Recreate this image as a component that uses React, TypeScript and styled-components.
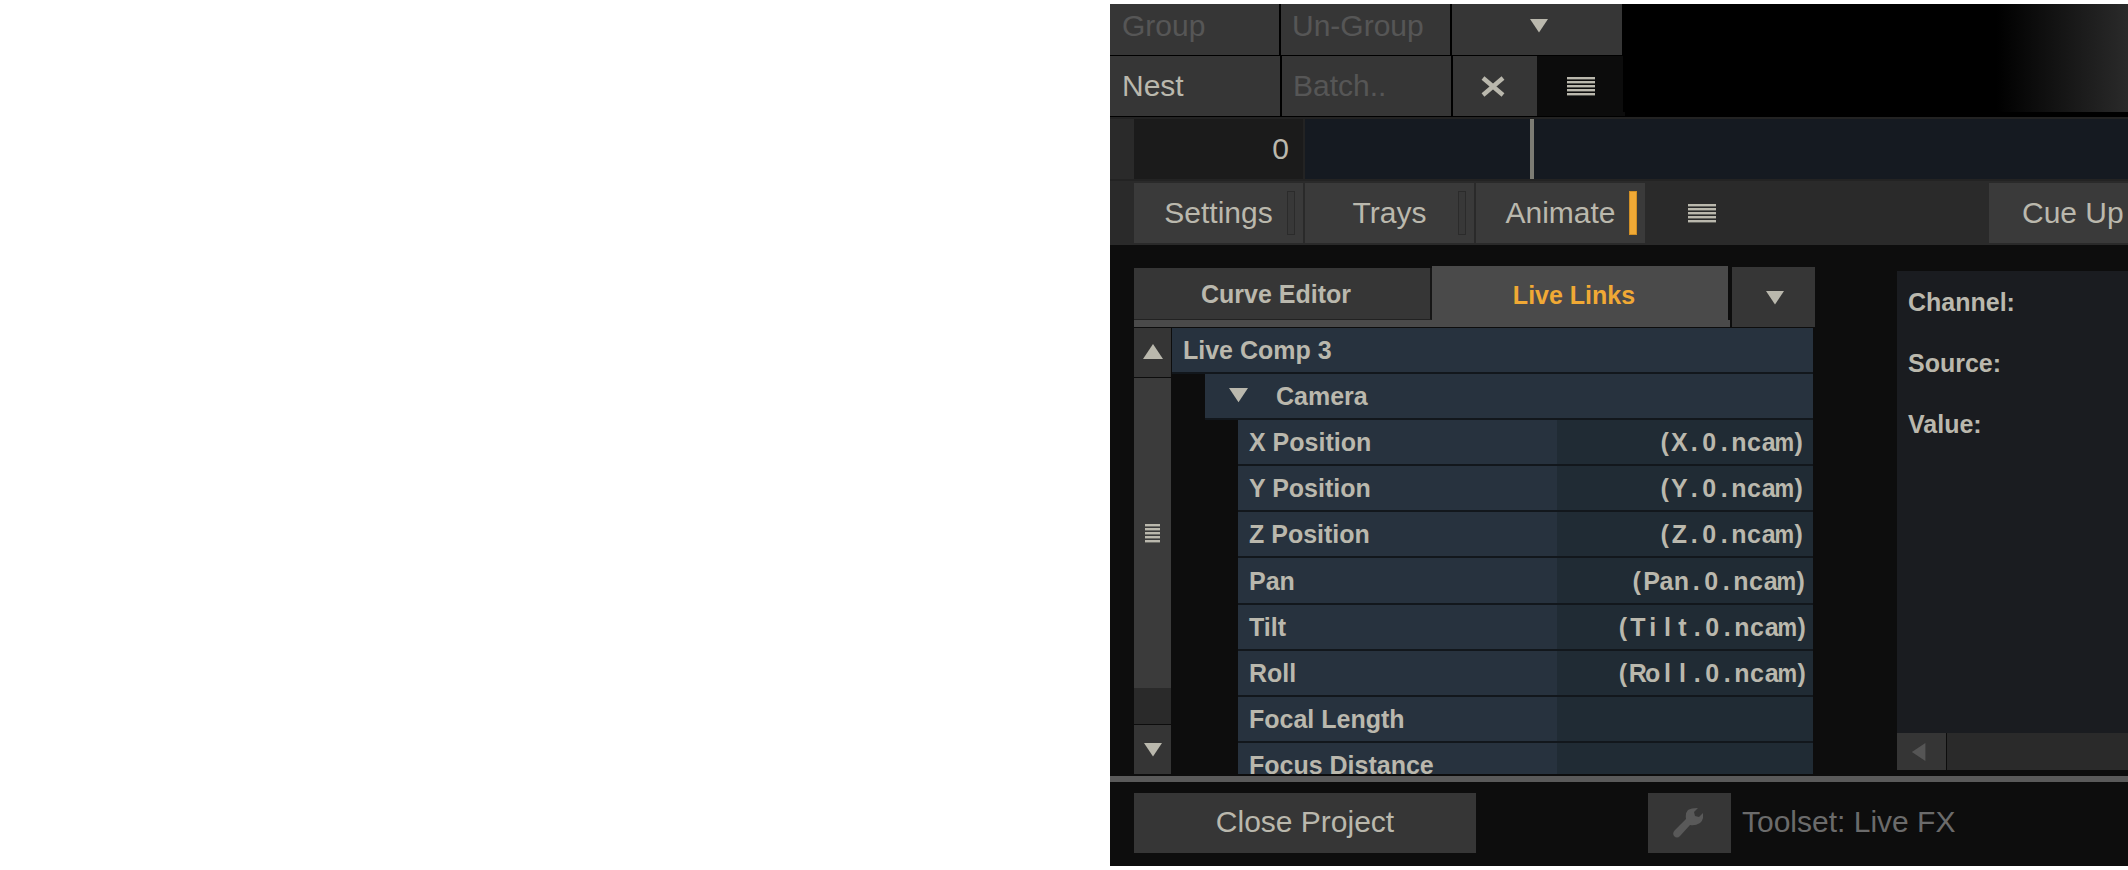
import React from "react"
import styled, { createGlobalStyle } from "styled-components"

const text_color = "#bab8ad"
const dim_color = "#565656"
const orange = "#f0a935"
const button_bg = "#363636"
const strip_bg = "#2a2a2a"
const dark_bg = "#0d0d0d"

const GlobalStyle = createGlobalStyle`
  html, body {
    margin: 0;
    padding: 0;
    background: #fff;
  }
  * {
    box-sizing: border-box;
  }
`

const Page = styled.div`
  height: 870px;
  padding: 4px 0;
  display: flex;
  justify-content: flex-end;
  font-family: "Liberation Sans", Arial, sans-serif;
  color: ${text_color};
`

const Panel = styled.div`
  width: 1018px;
  height: 862px;
  background: ${dark_bg};
  display: flex;
  flex-direction: column;
  overflow: hidden;
`

const TopArea = styled.div`
  height: 113px;
  background: #000;
  display: flex;
`

const ButtonGrid = styled.div`
  width: 513px;
  flex: none;
  display: flex;
  flex-direction: column;
  gap: 1px;
`

const GridRow = styled.div<{ $height: number }>`
  height: ${p => p.$height}px;
  display: flex;
  gap: 2px;
`

const GridButton = styled.div<{
  $width: number
  $dim?: boolean
  $center?: boolean
  $dark?: boolean
  $lift?: number
  $pad?: number
}>`
  width: ${p => p.$width}px;
  flex: none;
  display: flex;
  align-items: center;
  justify-content: ${p => (p.$center ? "center" : "flex-start")};
  padding-left: ${p => p.$pad ?? (p.$center ? 0 : 11)}px;
  padding-bottom: ${p => p.$lift ?? 0}px;
  font-size: 30px;
  background: ${p => (p.$dark ? "#0c0c0c" : button_bg)};
  color: ${p => (p.$dim ? dim_color : text_color)};
`

const MenuCell = styled(GridButton)`
  margin-left: -2px;
`

const CloseCell = styled(GridButton)`
  padding-right: 4px;
`

const Fade = styled.div`
  flex: 1;
  height: 108px;
  background: linear-gradient(to right, #000 74%, #2a2a2a 100%);
`

const TimeRow = styled.div`
  height: 64px;
  padding: 2px 0;
  display: flex;
  background: #232323;
`

const TimeInset = styled.div`
  width: 24px;
  background: ${strip_bg};
`

const TimeField = styled.div`
  width: 169px;
  padding-right: 14px;
  background: #1b1b1b;
  display: flex;
  align-items: center;
  justify-content: flex-end;
  font-size: 30px;
`

const TimeTrack = styled.div`
  flex: 1;
  margin-left: 2px;
  padding-left: 225px;
  background: #151a21;
`

const Playhead = styled.div`
  width: 4px;
  height: 100%;
  background: #7c7c74;
`

const ModeBar = styled.div`
  height: 64px;
  padding: 2px 0 2px 24px;
  display: flex;
  gap: 2px;
  background: ${strip_bg};
`

const ModeButton = styled.div`
  position: relative;
  width: 169px;
  display: flex;
  align-items: center;
  justify-content: center;
  font-size: 30px;
  background: #3a3a3a;
`

const Indicator = styled.span<{ $on?: boolean }>`
  position: absolute;
  right: 8px;
  top: 8px;
  bottom: 8px;
  width: 8px;
  background: ${p => (p.$on ? orange : "#383838")};
  border: 1px solid ${p => (p.$on ? "#d08f25" : "#2b2b2b")};
`

const ModeMenu = styled.div`
  width: 69px;
  display: flex;
  align-items: center;
  justify-content: flex-end;
`

const CueButton = styled.div`
  margin-left: auto;
  width: 139px;
  padding-left: 33px;
  display: flex;
  align-items: center;
  font-size: 30px;
  white-space: nowrap;
  background: #3a3a3a;
`

const Main = styled.div`
  height: 530px;
  padding-left: 24px;
  display: flex;
`

const LeftColumn = styled.div`
  width: 681px;
  flex: none;
  padding-top: 21px;
  display: flex;
  flex-direction: column;
`

const TabBar = styled.div`
  height: 62px;
  display: flex;
  gap: 2px;
`

const TabGroup = styled.div`
  width: 596px;
  display: flex;
  flex-direction: column;
`

const TabRow = styled.div`
  height: 54px;
  display: flex;
`

const Tab = styled.div<{ $active?: boolean }>`
  width: 298px;
  padding-right: 12px;
  display: flex;
  align-items: center;
  justify-content: center;
  font-size: 25px;
  font-weight: bold;
  ${p =>
    p.$active
      ? `
    padding-top: 4px;
    background: #4a4a4a;
    border-right: 2px solid ${dark_bg};
    color: ${orange};
  `
      : `
    margin-top: 2px;
    padding-top: 2px;
    background: #363636;
    border-right: 2px solid #161616;
    border-bottom: 1px solid #222;
  `}
`

const TabSill = styled.div`
  height: 7px;
  background: #4a4a4a;
`

const TabMenu = styled.div`
  width: 83px;
  height: 60px;
  margin-top: 1px;
  padding: 23px 0 0 2px;
  background: #363636;
  display: flex;
  align-items: flex-start;
  justify-content: center;
`

const ListArea = styled.div`
  height: 446px;
  display: flex;
`

const ScrollColumn = styled.div`
  width: 37px;
  display: flex;
  flex-direction: column;
`

const ScrollButton = styled.div<{ $height: number; $drop?: number }>`
  height: ${p => p.$height}px;
  padding-top: ${p => p.$drop ?? 0}px;
  flex: none;
  background: #353535;
  display: flex;
  align-items: center;
  justify-content: center;
`

const ScrollThumb = styled.div`
  height: 310px;
  margin-top: 1px;
  background: #3b3b3b;
  display: flex;
  align-items: center;
  justify-content: center;
`

const ScrollRest = styled.div`
  height: 36px;
  margin-bottom: 1px;
  background: #2a2a2a;
`

const Tree = styled.div`
  width: 641px;
  margin-left: 1px;
  overflow: hidden;
`

const TreeRow = styled.div<{ $indent: number }>`
  height: 46.1px;
  margin-left: ${p => p.$indent}px;
  display: flex;
  font-size: 25px;
  font-weight: bold;
  border-bottom: 2px solid #12171c;
`

const NameCell = styled.div<{ $width?: number; $pad: number; $drop?: number }>`
  ${p => (p.$width ? `width: ${p.$width}px;` : "flex: 1;")}
  padding-left: ${p => p.$pad}px;
  padding-top: ${p => p.$drop ?? 0}px;
  display: flex;
  align-items: center;
  white-space: nowrap;
  background: #27323e;
`

const TreeCaret = styled.span`
  display: flex;
  margin-right: 28px;
`

const ValueCell = styled.div<{ $inset: number }>`
  flex: 1;
  padding-top: 1px;
  padding-right: ${p => p.$inset}px;
  display: flex;
  align-items: center;
  justify-content: flex-end;
  background: #202b34;
`

const ValueChar = styled.span<{ $narrow?: boolean }>`
  width: 14.9px;
  display: inline-flex;
  justify-content: center;
  ${p => p.$narrow && "transform: scaleX(0.88) translateX(1px);"}
`

const InfoPanel = styled.div`
  flex: 1;
  margin: 26px 0 5px 82px;
  display: flex;
  flex-direction: column;
`

const InfoBody = styled.div`
  flex: 1;
  padding: 1px 0 0 11px;
  background: #1a1c20;
`

const InfoLabel = styled.div`
  height: 61px;
  line-height: 61px;
  font-size: 25px;
  font-weight: bold;
`

const HScroll = styled.div`
  height: 37px;
  display: flex;
  gap: 1px;
`

const HScrollButton = styled.div`
  width: 49px;
  padding-right: 4px;
  background: #353535;
  display: flex;
  align-items: center;
  justify-content: center;
`

const HScrollTrack = styled.div`
  flex: 1;
  background: #2a2a2a;
`

const Divider = styled.div`
  height: 6px;
  margin-top: 1px;
  background: #5a5a5a;
`

const Footer = styled.div`
  flex: 1;
  padding: 11px 0 0 24px;
  display: flex;
  align-items: flex-start;
`

const CloseButton = styled.div`
  width: 342px;
  height: 60px;
  padding-bottom: 2px;
  display: flex;
  align-items: center;
  justify-content: center;
  font-size: 30px;
  background: #363636;
`

const ToolButton = styled.div`
  width: 83px;
  height: 60px;
  margin-left: 172px;
  padding-right: 3px;
  display: flex;
  align-items: center;
  justify-content: center;
  background: #363636;
`

const ToolLabel = styled.div`
  height: 60px;
  padding-bottom: 2px;
  margin-left: 11px;
  display: flex;
  align-items: center;
  font-size: 30px;
  color: #6b6b6b;
`

const Triangle: React.FC<{ dir: "up" | "down" | "left"; size: number; color?: string }> = ({
  dir,
  size,
  color = text_color,
}) => {
  const points = {
    up: "10,1 20,16 0,16",
    down: "0,1 20,1 10,16",
    left: "16,0 16,20 1,10",
  }[dir]
  return (
    <svg width={size} height={size} viewBox="0 0 20 20" style={{ display: "block" }}>
      <polygon points={points} fill={color} />
    </svg>
  )
}

const MenuLines: React.FC<{ width: number }> = ({ width }) => (
  <svg width={width} height="19" viewBox={`0 0 ${width} 19`} style={{ display: "block" }}>
    {[0, 4, 8, 12, 16].map(y => (
      <rect key={y} x="0" y={y} width={width} height="2.4" fill={text_color} />
    ))}
  </svg>
)

const CloseIcon = () => (
  <svg width="24" height="21" viewBox="0 0 24 21" style={{ display: "block" }}>
    <path d="M2 2 L22 19 M22 2 L2 19" stroke={text_color} strokeWidth="4.4" />
  </svg>
)

const WrenchIcon = () => (
  <svg width="30" height="30" viewBox="0 0 30 30" style={{ display: "block" }}>
    <path
      d="M15 2 Q18 0 25 0 L21 4 L22 8 L26 9 L30 5 Q31 12 27 15 Q22 18 17 17 L7 28 Q4 31 1 28 Q-1 25 2 22 L13 11 Q12 5 15 2 Z"
      fill="#595959"
    />
  </svg>
)

type Channel = {
  name: string
  value: string
  inset: number
}

const channels: Channel[] = [
  { name: "X Position", value: "(X.0.ncam)", inset: 7 },
  { name: "Y Position", value: "(Y.0.ncam)", inset: 7 },
  { name: "Z Position", value: "(Z.0.ncam)", inset: 7 },
  { name: "Pan", value: "(Pan.0.ncam)", inset: 5 },
  { name: "Tilt", value: "(Tilt.0.ncam)", inset: 4 },
  { name: "Roll", value: "(Roll.0.ncam)", inset: 4 },
  { name: "Focal Length", value: "", inset: 4 },
  { name: "Focus Distance", value: "", inset: 4 },
]

const App: React.FC = () => {
  return (
    <Page>
      <GlobalStyle />
      <Panel>
        <TopArea>
          <ButtonGrid>
            <GridRow $height={51}>
              <GridButton $width={169} $dim $lift={8} $pad={12}>Group</GridButton>
              <GridButton $width={169} $dim $lift={8}>Un-Group</GridButton>
              <GridButton $width={170} $center $lift={6} $pad={3}>
                <Triangle dir="down" size={18} />
              </GridButton>
            </GridRow>
            <GridRow $height={60}>
              <GridButton $width={170} $pad={12}>Nest</GridButton>
              <GridButton $width={169} $dim>Batch..</GridButton>
              <CloseCell $width={84} $center>
                <CloseIcon />
              </CloseCell>
              <MenuCell $width={88} $center $dark>
                <MenuLines width={28} />
              </MenuCell>
            </GridRow>
          </ButtonGrid>
          <Fade />
        </TopArea>

        <TimeRow>
          <TimeInset />
          <TimeField>0</TimeField>
          <TimeTrack>
            <Playhead />
          </TimeTrack>
        </TimeRow>

        <ModeBar>
          <ModeButton>
            Settings
            <Indicator />
          </ModeButton>
          <ModeButton>
            Trays
            <Indicator />
          </ModeButton>
          <ModeButton>
            Animate
            <Indicator $on />
          </ModeButton>
          <ModeMenu>
            <MenuLines width={28} />
          </ModeMenu>
          <CueButton>Cue Up</CueButton>
        </ModeBar>

        <Main>
          <LeftColumn>
            <TabBar>
              <TabGroup>
                <TabRow>
                  <Tab>Curve Editor</Tab>
                  <Tab $active>Live Links</Tab>
                </TabRow>
                <TabSill />
              </TabGroup>
              <TabMenu>
                <Triangle dir="down" size={18} />
              </TabMenu>
            </TabBar>

            <ListArea>
              <ScrollColumn>
                <ScrollButton $height={49}>
                  <Triangle dir="up" size={20} />
                </ScrollButton>
                <ScrollThumb>
                  <MenuLines width={15} />
                </ScrollThumb>
                <ScrollRest />
                <ScrollButton $height={49} $drop={2}>
                  <Triangle dir="down" size={18} />
                </ScrollButton>
              </ScrollColumn>

              <Tree>
                <TreeRow $indent={0}>
                  <NameCell $pad={11}>Live Comp 3</NameCell>
                </TreeRow>
                <TreeRow $indent={33}>
                  <NameCell $pad={24}>
                    <TreeCaret>
                      <Triangle dir="down" size={19} />
                    </TreeCaret>
                    Camera
                  </NameCell>
                </TreeRow>
                {channels.map(channel => (
                  <TreeRow $indent={66} key={channel.name}>
                    <NameCell $width={319} $pad={11} $drop={1}>{channel.name}</NameCell>
                    <ValueCell $inset={channel.inset}>
                      {channel.value.split("").map((char, i) => (
                        <ValueChar key={i} $narrow={char === "m"}>{char}</ValueChar>
                      ))}
                    </ValueCell>
                  </TreeRow>
                ))}
              </Tree>
            </ListArea>
          </LeftColumn>

          <InfoPanel>
            <InfoBody>
              <InfoLabel>Channel:</InfoLabel>
              <InfoLabel>Source:</InfoLabel>
              <InfoLabel>Value:</InfoLabel>
            </InfoBody>
            <HScroll>
              <HScrollButton>
                <Triangle dir="left" size={18} color="#555" />
              </HScrollButton>
              <HScrollTrack />
            </HScroll>
          </InfoPanel>
        </Main>

        <Divider />

        <Footer>
          <CloseButton>Close Project</CloseButton>
          <ToolButton>
            <WrenchIcon />
          </ToolButton>
          <ToolLabel>Toolset: Live FX</ToolLabel>
        </Footer>
      </Panel>
    </Page>
  )
}

export default App
